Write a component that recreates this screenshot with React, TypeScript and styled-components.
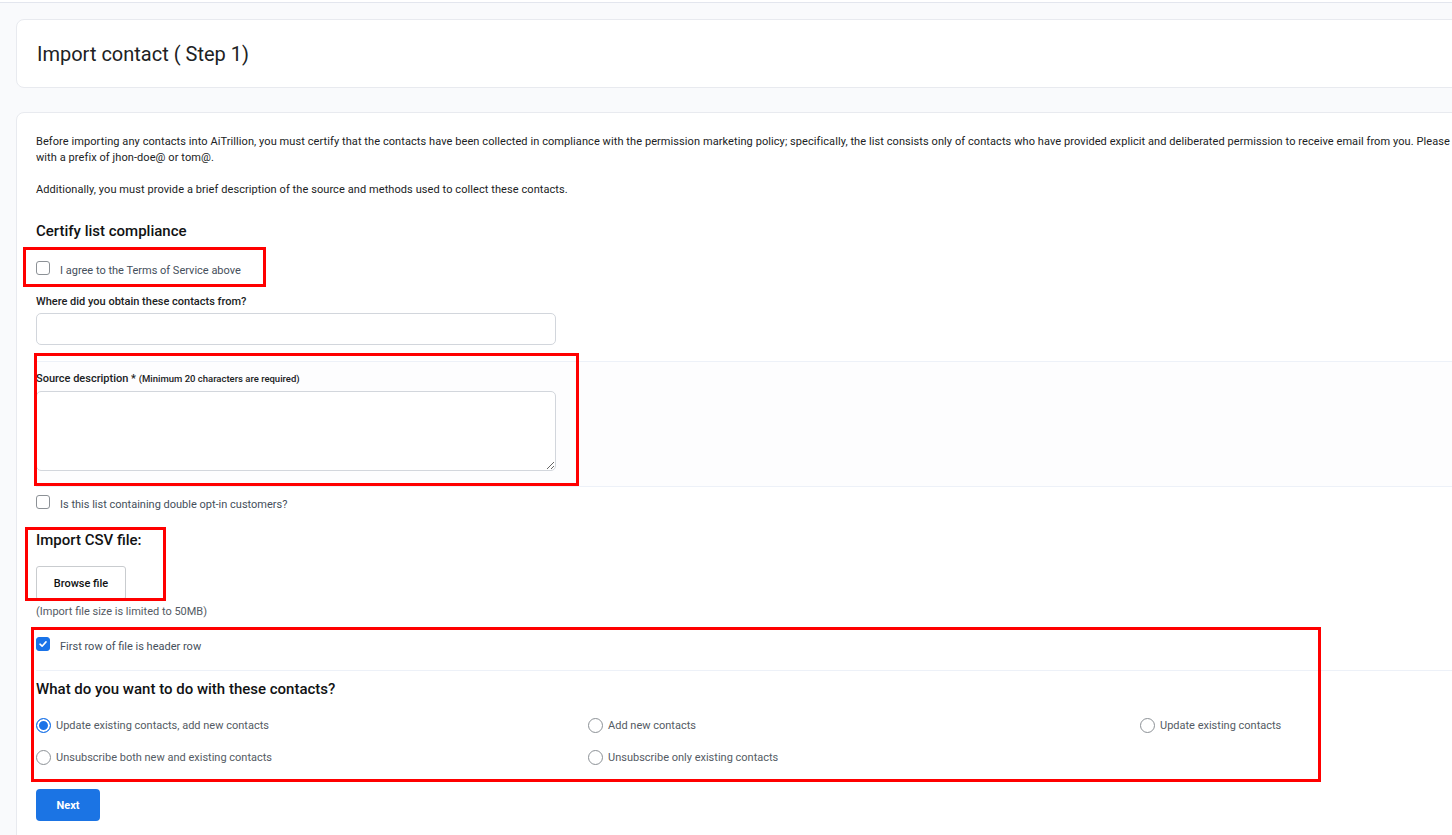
import React, { useState } from 'react';
import styled, { createGlobalStyle } from 'styled-components';

const GlobalStyle = createGlobalStyle`
  html, body {
    margin: 0;
    padding: 0;
    background: #f9fafc;
    overflow: hidden;
  }
  body {
    font-family: Roboto, "Liberation Sans", Arial, sans-serif;
    color: #202223;
  }
  * {
    box-sizing: border-box;
  }
`;

const radioOptions = [
  'Update existing contacts, add new contacts',
  'Add new contacts',
  'Update existing contacts',
  'Unsubscribe both new and existing contacts',
  'Unsubscribe only existing contacts',
];

// red review annotations drawn over the screenshot
const annotations = [
  { left: 23, top: 247, width: 243, height: 40 },
  { left: 34, top: 353, width: 545, height: 133 },
  { left: 25, top: 527, width: 141, height: 74 },
  { left: 31, top: 627, width: 1290, height: 155 },
];

const App = () => {
  const [agree, setAgree] = useState(false);
  const [doubleOptIn, setDoubleOptIn] = useState(false);
  const [headerRow, setHeaderRow] = useState(true);
  const [mode, setMode] = useState(radioOptions[0]);

  return (
    <>
      <GlobalStyle />
      <Page>
        <TopStrip />
        <Content>
          <HeaderCard>
            <Title>Import contact ( Step 1)</Title>
          </HeaderCard>

          <FormCard>
            <Paragraph>
              Before importing any contacts into AiTrillion, you must certify that the contacts have been
              collected in compliance with the permission marketing policy; specifically, the list consists
              only of contacts who have provided explicit and deliberated permission to receive email from
              you. Please
              <br />
              with a prefix of jhon-doe@ or tom@.
            </Paragraph>
            <Paragraph $gap={16}>
              Additionally, you must provide a brief description of the source and methods used to collect
              these contacts.
            </Paragraph>

            <SectionTitle $gap={23}>Certify list compliance</SectionTitle>

            <CheckRow $gap={19} onClick={() => setAgree(!agree)}>
              <CheckBox $checked={agree}>{agree && <CheckMark />}</CheckBox>
              <CheckLabel>I agree to the Terms of Service above</CheckLabel>
            </CheckRow>

            <FieldLabel $gap={14}>Where did you obtain these contacts from?</FieldLabel>
            <TextInput type="text" />

            <DividedSection>
              <FieldLabel>
                Source description * <Hint>(Minimum 20 characters are required)</Hint>
              </FieldLabel>
              <TextArea />
            </DividedSection>

            <CheckRow $gap={7} onClick={() => setDoubleOptIn(!doubleOptIn)}>
              <CheckBox $checked={doubleOptIn}>{doubleOptIn && <CheckMark />}</CheckBox>
              <CheckLabel>Is this list containing double opt-in customers?</CheckLabel>
            </CheckRow>

            <SectionTitle $gap={16}>Import CSV file:</SectionTitle>
            <BrowseButton type="button">Browse file</BrowseButton>
            <Note>(Import file size is limited to 50MB)</Note>

            <CheckRow $gap={16} onClick={() => setHeaderRow(!headerRow)}>
              <CheckBox $checked={headerRow}>{headerRow && <CheckMark />}</CheckBox>
              <CheckLabel>First row of file is header row</CheckLabel>
            </CheckRow>

            <ActionSection>
              <Question>What do you want to do with these contacts?</Question>
              <RadioGrid>
                {radioOptions.map((option) => (
                  <RadioRow key={option} onClick={() => setMode(option)}>
                    <RadioCircle $checked={mode === option} />
                    <RadioLabel>{option}</RadioLabel>
                  </RadioRow>
                ))}
              </RadioGrid>
            </ActionSection>

            <NextButton type="button">Next</NextButton>
          </FormCard>
        </Content>

        {annotations.map((box, i) => (
          <Annotation key={i} style={box} />
        ))}
      </Page>
    </>
  );
};

const CheckMark = () => (
  <svg width="10" height="10" viewBox="0 0 10 10" fill="none">
    <path d="M2 5.2 L4.1 7.2 L8 2.9" stroke="#fff" strokeWidth="1.6" strokeLinecap="round" strokeLinejoin="round" />
  </svg>
);

const Page = styled.div`
  position: relative;
  width: 1800px;
  min-height: 835px;
`;

const TopStrip = styled.div`
  height: 3px;
  background: #ffffff;
  border-bottom: 1px solid #e3e6ee;
`;

const Content = styled.div`
  padding: 16px 0 0 16px;
  display: flex;
  flex-direction: column;
  gap: 24px;
`;

const HeaderCard = styled.div`
  height: 69px;
  background: #ffffff;
  border: 1px solid #e8eaef;
  border-radius: 8px;
  display: flex;
  align-items: center;
  padding: 0 20px;
`;

const Title = styled.h1`
  margin: 0;
  font-size: 20px;
  font-weight: 400;
  color: #202223;
`;

const FormCard = styled.div`
  background: #ffffff;
  border: 1px solid #e8eaef;
  border-radius: 8px 0 0 0;
  padding: 21px 0 40px 19px;
  display: flex;
  flex-direction: column;
  align-items: flex-start;
  min-height: 760px;
`;

const Paragraph = styled.p<{ $gap?: number }>`
  margin: ${(p) => p.$gap ?? 0}px 0 0;
  font-size: 11px;
  line-height: 16px;
  letter-spacing: 0.08px;
  color: #202223;
  white-space: nowrap;
`;

const SectionTitle = styled.h3<{ $gap?: number }>`
  margin: ${(p) => p.$gap ?? 0}px 0 0;
  font-size: 15px;
  line-height: 20px;
  font-weight: 500;
  color: #111213;
`;

const CheckRow = styled.label<{ $gap?: number }>`
  margin-top: ${(p) => p.$gap ?? 0}px;
  height: 20px;
  display: flex;
  align-items: center;
  gap: 10px;
  cursor: pointer;
`;

const CheckBox = styled.span<{ $checked: boolean }>`
  width: 14px;
  height: 14px;
  margin-top: -4px;
  border-radius: 3px;
  border: 1px solid ${(p) => (p.$checked ? '#1a73e8' : '#8c9196')};
  background: ${(p) => (p.$checked ? '#1a73e8' : '#ffffff')};
  display: flex;
  align-items: center;
  justify-content: center;
`;

const CheckLabel = styled.span`
  font-size: 11px;
  color: #454f5b;
`;

const FieldLabel = styled.div<{ $gap?: number }>`
  margin-top: ${(p) => p.$gap ?? 0}px;
  font-size: 11px;
  line-height: 16px;
  font-weight: 500;
  color: #202223;
`;

const Hint = styled.span`
  font-size: 9.5px;
`;

const TextInput = styled.input`
  margin-top: 3px;
  width: 520px;
  height: 32px;
  border: 1px solid #d2d6dc;
  border-radius: 5px;
  outline: none;
  padding: 0 10px;
  font-family: inherit;
`;

const DividedSection = styled.div`
  margin-top: 16px;
  align-self: stretch;
  border-top: 1px solid #edf1f8;
  border-bottom: 1px solid #edf1f8;
  background: #fdfdfe;
  padding: 9px 0 15px;
`;

const TextArea = styled.textarea`
  display: block;
  margin-top: 4px;
  width: 520px;
  height: 80px;
  border: 1px solid #d2d6dc;
  border-radius: 5px;
  outline: none;
  resize: vertical;
  font-family: inherit;
`;

const BrowseButton = styled.button`
  margin-top: 16px;
  width: 90px;
  height: 34px;
  background: #ffffff;
  border: 1px solid #c9cccf;
  border-radius: 3px;
  font-family: inherit;
  font-size: 11px;
  font-weight: 500;
  color: #111213;
  padding: 0;
`;

const Note = styled.div`
  margin-top: 4px;
  font-size: 11px;
  line-height: 16px;
  color: #545b64;
`;

const ActionSection = styled.div`
  margin-top: 14px;
  align-self: stretch;
  border-top: 1px solid #edf1f8;
  padding-top: 7px;
`;

const Question = styled.h3`
  margin: 0;
  font-size: 15px;
  line-height: 22px;
  font-weight: 500;
  color: #111213;
`;

const RadioGrid = styled.div`
  margin-top: 15px;
  display: grid;
  grid-template-columns: repeat(3, 552px);
  row-gap: 12px;
`;

const RadioRow = styled.label`
  height: 20px;
  display: flex;
  align-items: center;
  gap: 5px;
  cursor: pointer;
`;

const RadioCircle = styled.span<{ $checked: boolean }>`
  width: 15px;
  height: 15px;
  border-radius: 50%;
  border: 1px solid ${(p) => (p.$checked ? '#1a73e8' : '#8c9196')};
  background: ${(p) => (p.$checked ? '#1a73e8' : '#ffffff')};
  box-shadow: ${(p) => (p.$checked ? 'inset 0 0 0 2px #ffffff' : 'none')};
`;

const RadioLabel = styled.span`
  font-size: 11px;
  color: #545b64;
`;

const NextButton = styled.button`
  margin-top: 22px;
  width: 64px;
  height: 32px;
  border: none;
  border-radius: 4px;
  background: #1b74e4;
  color: #ffffff;
  font-family: inherit;
  font-size: 11px;
  font-weight: 700;
`;

const Annotation = styled.div`
  position: absolute;
  border: 3px solid #ff0000;
  pointer-events: none;
`;

export default App;
